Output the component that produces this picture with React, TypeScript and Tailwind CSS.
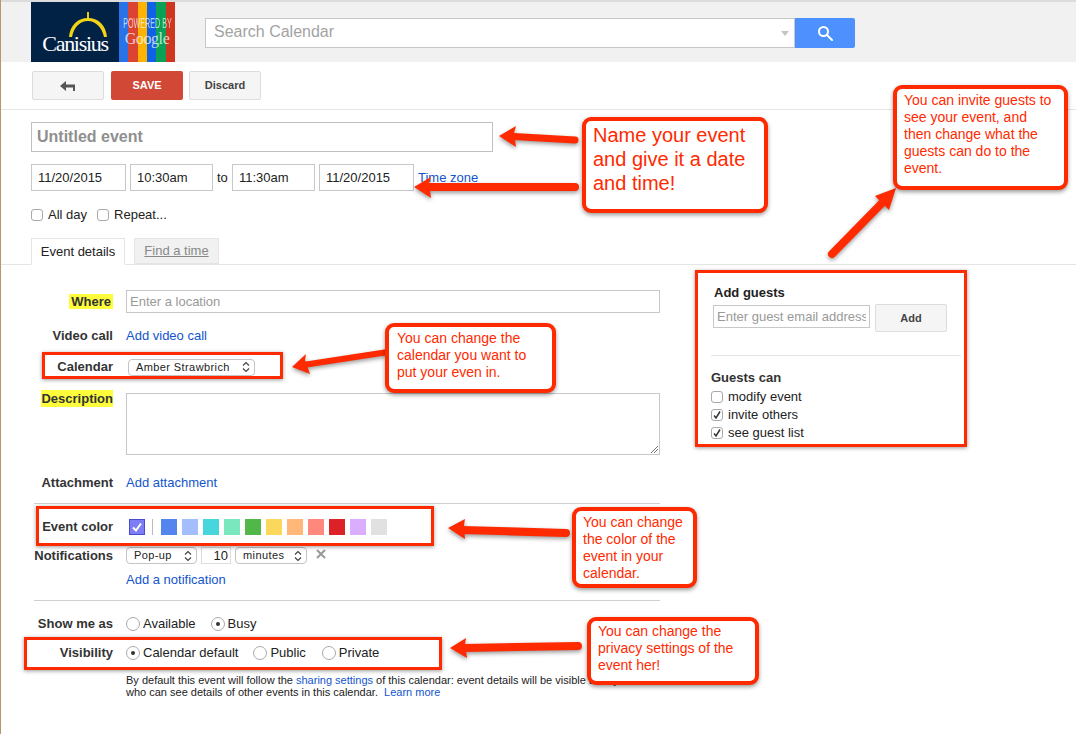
import type { ReactNode } from 'react'

const swatches = ['bg-[#5484ed]', 'bg-[#a4bdfc]', 'bg-[#46d6db]', 'bg-[#7ae7bf]', 'bg-[#51b749]', 'bg-[#fbd75b]', 'bg-[#ffb878]', 'bg-[#ff887c]', 'bg-[#dc2127]', 'bg-[#dbadff]', 'bg-[#e1e1e1]']
const stripes = ['bg-[#2a72e8]', 'bg-[#db4332]', 'bg-[#fdb300]', 'bg-[#0f62e6]', 'bg-[#0aa055]', 'bg-[#cf3620]']

// tip, head, shaft and tail of each annotation arrow
const arrows = [
  { head: '499,136 516,126 514,133 516,147', tail: 'M514 136.5 L575 140', w: 7 },
  { head: '414,187 431,177 429,183 431,198', tail: 'M428 187 L575 187', w: 8 },
  { head: '896,188 875,196 881,202 889,210', tail: 'M884 201 L832 254', w: 8 },
  { head: '292,367 306,354 305,360 310,374', tail: 'M303 365 L388 352', w: 6 },
  { head: '448,528 465,519 464,525 465,539', tail: 'M462 530 L566 533', w: 8 },
  { head: '450,648 466,638 465,644 467,658', tail: 'M463 648 L578 646', w: 8 },
]

function Chevrons() {
  return (
    <svg width="8" height="12" viewBox="0 0 8 12" className="shrink-0" fill="none" stroke="#444" strokeWidth="1.2">
      <path d="M1 4.5 L4 1.5 L7 4.5" />
      <path d="M1 7.5 L4 10.5 L7 7.5" />
    </svg>
  )
}

function Select({ label, className }: { label: string; className: string }) {
  return (
    <div className={`flex items-center justify-between h-[17px] pl-[7px] pr-[4px] rounded-[4px] border border-[#c4c4c4] bg-white text-[11px] text-[#222] tracking-[0.4px] ${className}`}>
      {label}
      <Chevrons />
    </div>
  )
}

function Checkbox({ checked }: { checked?: boolean }) {
  return (
    <span className="flex items-center justify-center w-[12px] h-[12px] rounded-[3px] border border-[#a9a9a9] bg-white shrink-0">
      {checked && (
        <svg width="10" height="10" viewBox="0 0 10 10" fill="none" stroke="#333" strokeWidth="1.5">
          <path d="M2 5.5 L4 8 L8 1.5" />
        </svg>
      )}
    </span>
  )
}

function Radio({ label, checked, className }: { label: string; checked?: boolean; className?: string }) {
  return (
    <span className={`flex items-center gap-[3px] ${className ?? ''}`}>
      <span className="flex items-center justify-center w-[14px] h-[14px] rounded-full border border-[#aaa] bg-white">
        {checked && <span className="w-[4px] h-[4px] rounded-full bg-[#333]" />}
      </span>
      <span className="text-[13px] text-[#222]">{label}</span>
    </span>
  )
}

function Row({ label, className, children }: { label: ReactNode; className?: string; children: ReactNode }) {
  return (
    <div className={`flex items-center ${className ?? ''}`}>
      <div className="w-[112px] shrink-0 text-right text-[13px] font-bold text-[#333]">{label}</div>
      <div className="ml-[13px] flex-1 flex items-center">{children}</div>
    </div>
  )
}

function Callout({ className, children }: { className: string; children: ReactNode }) {
  return (
    <div className={`absolute bg-white border-[4px] border-[#ff2a00] rounded-[9px] text-[#ff2a00] shadow-[0_2px_4px_rgba(0,0,0,0.4)] ${className}`}>
      {children}
    </div>
  )
}

function RedBox({ className }: { className: string }) {
  return <div className={`absolute border-[3px] border-[#ff2a00] shadow-[0_1px_4px_rgba(0,0,0,0.4)] ${className}`} />
}

const inputCls = 'border border-[#c8c8c8] bg-white outline-none text-[13px] text-[#222] placeholder:text-[#999]'

export default function App() {
  return (
    <div className="relative w-[1076px] h-[734px] overflow-hidden bg-white border-l border-[#b8956f] font-['Liberation_Sans',Arial,sans-serif]">
      {/* header */}
      <div className="h-[62px] bg-[#f1f1f1] border-t-2 border-[#dcdcdc] flex items-start">
        <div className="ml-[30px] flex w-[144px] h-[60px]">
          <div className="w-[88px] bg-[#012145] flex flex-col items-center pt-[10px]">
            <svg width="42" height="26" viewBox="0 0 42 26" fill="none" className="ml-[26px]">
              <path d="M21 0 V7" stroke="#e8c81e" strokeWidth="2" />
              <path d="M2 25 C3 13 11 6 21 6 C31 6 39 13 40 25 L37 25 C35 15 28 9 21 9 C13 9 7 15 5 25 Z" fill="#f2d416" />
            </svg>
            <span className="-mt-[6px] text-[22px] leading-[24px] tracking-[-1.3px] text-white font-['Liberation_Serif',serif]">Canisius</span>
          </div>
          <div className="relative flex-1 flex">
            {stripes.map((s, i) => <div key={i} className={`flex-1 ${s}`} />)}
            <div className="absolute inset-0 flex flex-col items-center pt-[13px]">
              <span className="text-[14px] leading-[16px] text-white/70 whitespace-nowrap scale-x-[0.51]">POWERED BY</span>
              <span className="text-[16px] leading-[16px] tracking-[-0.4px] text-white/75 font-['Liberation_Serif',serif]">Google</span>
            </div>
          </div>
        </div>
        <div className="ml-[30px] mt-[16px] flex h-[30px]">
          <div className="w-[590px] flex items-center justify-between bg-white border border-[#c8c8c8] pl-[8px] pr-[4px]">
            <span className="text-[16px] text-[#a3a3a3] -mt-[2px]">Search Calendar</span>
            <span className="w-0 h-0 mr-[1px] border-x-[4px] border-x-transparent border-t-[5px] border-t-[#c4c4c4]" />
          </div>
          <div className="w-[60px] flex items-center justify-center bg-[#4d90fe] rounded-r-[2px]">
            <svg width="16" height="16" viewBox="0 0 16 16" fill="none" stroke="white" strokeWidth="2">
              <circle cx="6.5" cy="6.5" r="4.5" />
              <path d="M10 10 L15 15" strokeLinecap="round" />
            </svg>
          </div>
        </div>
      </div>

      {/* action buttons */}
      <div className="h-[48px] border-b border-[#e5e5e5] flex items-start pt-[9px] pl-[31px]">
        <div className="w-[72px] h-[29px] flex items-center justify-center rounded-[2px] border border-[#dcdcdc] bg-[#f5f5f5]">
          <svg width="16" height="10" viewBox="0 0 16 10" fill="#555">
            <path d="M0 5 L6 0 V3.5 H15 V10 H13 V6.5 H6 V10 Z" />
          </svg>
        </div>
        <div className="ml-[7px] w-[72px] h-[29px] flex items-center justify-center rounded-[2px] bg-[#d14836] text-[11px] font-bold text-white">SAVE</div>
        <div className="ml-[6px] w-[72px] h-[29px] flex items-center justify-center rounded-[2px] border border-[#dcdcdc] bg-[#f5f5f5] text-[11px] font-bold text-[#444]">Discard</div>
      </div>

      {/* title and date */}
      <div className="pl-[30px] pt-[12px]">
        <input readOnly placeholder="Untitled event" className="block w-[462px] h-[30px] px-[5px] border border-[#c0c0c0] outline-none text-[16px] font-bold placeholder:text-[#8f8f8f]" />
        <div className="mt-[12px] flex items-center h-[27px]">
          <input readOnly defaultValue="11/20/2015" className={`w-[95px] h-full px-[6px] ${inputCls}`} />
          <input readOnly defaultValue="10:30am" className={`ml-[4px] w-[83px] h-full px-[6px] ${inputCls}`} />
          <span className="mx-[4px] w-[11px] text-[13px] text-[#222]">to</span>
          <input readOnly defaultValue="11:30am" className={`w-[83px] h-full px-[6px] ${inputCls}`} />
          <input readOnly defaultValue="11/20/2015" className={`ml-[4px] w-[95px] h-full px-[6px] ${inputCls}`} />
          <span className="ml-[4px] text-[13px] text-[#1155cc]">Time zone</span>
        </div>
        <div className="mt-[17px] flex items-center h-[14px] text-[13px] text-[#222]">
          <Checkbox />
          <span className="ml-[5px]">All day</span>
          <span className="ml-[10px]"><Checkbox /></span>
          <span className="ml-[5px]">Repeat...</span>
        </div>
      </div>

      {/* tabs */}
      <div className="mt-[16px] h-[27px] border-b border-[#e5e5e5] pl-[30px] flex items-end">
        <div className="w-[94px] h-[27px] -mb-px flex items-center justify-center bg-white border border-[#e5e5e5] border-b-white text-[13px] text-[#222]">Event details</div>
        <div className="ml-[9px] w-[85px] h-[26px] flex items-center justify-center bg-[#f1f1f1] border border-[#e5e5e5] text-[13px] text-[#888] underline">Find a time</div>
      </div>

      <div className="flex items-start">
        {/* details form */}
        <div className="w-[659px] shrink-0 pt-[25px]">
          <Row label={<span className="bg-[#fdfd3c] px-[2px]">Where</span>} className="h-[23px]">
            <input readOnly placeholder="Enter a location" className={`w-full h-[23px] px-[3px] ${inputCls}`} />
          </Row>
          <Row label="Video call" className="mt-[13px] h-[20px]">
            <span className="text-[13px] text-[#1155cc]">Add video call</span>
          </Row>
          <Row label="Calendar" className="mt-[12px] h-[18px]">
            <Select label="Amber Strawbrich" className="ml-[2px] w-[127px]" />
          </Row>
          <div className="mt-[17px] flex items-start">
            <div className="w-[112px] shrink-0 text-right text-[13px] font-bold text-[#333] -mt-[4px]"><span className="bg-[#fdfd3c] py-[1px]">Description</span></div>
            <div className="relative ml-[13px] flex-1 h-[62px] border border-[#c8c8c8]">
              <svg width="10" height="10" viewBox="0 0 10 10" className="absolute right-0 bottom-0" stroke="#777" strokeWidth="1">
                <path d="M2 9 L9 2 M5 9 L9 5" />
              </svg>
            </div>
          </div>
          <Row label="Attachment" className="mt-[18px] h-[20px]">
            <span className="text-[13px] text-[#1155cc]">Add attachment</span>
          </Row>
          <div className="mt-[10px] ml-[33px] h-px bg-[#cfcfcf]" />
          <Row label="Event color" className="mt-[15px] h-[16px]">
            <span className="ml-[3px] flex items-center justify-center w-[16px] h-[16px] bg-[#7d7df5] border border-[#4a4ad0]">
              <svg width="12" height="12" viewBox="0 0 12 12" fill="none" stroke="white" strokeWidth="2">
                <path d="M2 6.5 L5 9.5 L10 2.5" />
              </svg>
            </span>
            <span className="ml-[7px] w-px h-[16px] bg-[#bbb]" />
            <div className="ml-[8px] flex gap-[5px]">
              {swatches.map((s) => <span key={s} className={`w-[16px] h-[16px] ${s}`} />)}
            </div>
          </Row>
          <Row label="Notifications" className="mt-[13px] h-[17px] -translate-y-[1px]">
            <Select label="Pop-up" className="w-[71px]" />
            <span className="ml-[4px] w-[30px] h-[17px] flex items-center justify-end pr-[2px] border border-[#ddd] text-[13px] text-[#222]">10</span>
            <Select label="minutes" className="ml-[4px] w-[72px]" />
            <svg width="10" height="10" viewBox="0 0 10 10" stroke="#999" strokeWidth="2" className="ml-[9px] -mt-[3px]">
              <path d="M1 1 L9 9 M9 1 L1 9" />
            </svg>
          </Row>
          <div className="mt-[5px] pl-[125px] h-[20px] flex items-center text-[13px] text-[#1155cc]">Add a notification</div>
          <div className="mt-[10px] ml-[33px] h-px bg-[#cfcfcf]" />
          <Row label="Show me as" className="mt-[13px] h-[20px]">
            <Radio label="Available" />
            <Radio label="Busy" checked className="ml-[15px]" />
          </Row>
          <Row label="Visibility" className="mt-[9px] h-[20px]">
            <Radio label="Calendar default" checked />
            <Radio label="Public" className="ml-[15px]" />
            <Radio label="Private" className="ml-[16px]" />
          </Row>
          <div className="mt-[11px] pl-[125px] text-[11px] leading-[12px] text-[#222] whitespace-nowrap">
            <div>By default this event will follow the <span className="text-[#1155cc]">sharing settings</span> of this calendar: event details will be visible to anyone</div>
            <div>who can see details of other events in this calendar.&nbsp; <span className="text-[#1155cc]">Learn more</span></div>
          </div>
        </div>

        {/* guests panel */}
        <div className="ml-[51px] w-[250px] pt-[20px]">
          <div className="pl-[3px] text-[13px] leading-[15px] font-bold text-[#222]">Add guests</div>
          <div className="pl-[2px] flex items-start">
            <input readOnly placeholder="Enter guest email addresses" className={`mt-[5px] w-[157px] h-[23px] px-[3px] ${inputCls}`} />
            <div className="ml-[5px] mt-[4px] w-[72px] h-[28px] flex items-center justify-center rounded-[2px] border border-[#dcdcdc] bg-[#f5f5f5] text-[11px] font-bold text-[#444]">Add</div>
          </div>
          <div className="mt-[23px] h-px bg-[#e5e5e5]" />
          <div className="mt-[14px] text-[13px] leading-[15px] font-bold text-[#333]">Guests can</div>
          <div className="mt-[3px] flex flex-col">
            <div className="h-[18px] flex items-center gap-[5px] text-[13px] text-[#222]"><Checkbox />modify event</div>
            <div className="h-[18px] flex items-center gap-[5px] text-[13px] text-[#222]"><Checkbox checked />invite others</div>
            <div className="h-[18px] flex items-center gap-[5px] text-[13px] text-[#222]"><Checkbox checked />see guest list</div>
          </div>
        </div>
      </div>

      {/* annotations drawn over the page */}
      <svg width="1076" height="734" viewBox="0 0 1076 734" className="absolute -left-px top-0 pointer-events-none [filter:drop-shadow(0_2px_2px_rgba(0,0,0,0.4))]">
        {arrows.map((a, i) => (
          <g key={i}>
            <path d={a.tail} stroke="#ff2a00" strokeWidth={a.w} strokeLinecap="round" fill="none" />
            <polygon points={a.head} fill="#ff2a00" />
          </g>
        ))}
      </svg>

      <RedBox className="left-[41px] top-[352px] w-[241px] h-[27px]" />
      <RedBox className="left-[35px] top-[506px] w-[398px] h-[40px]" />
      <RedBox className="left-[23px] top-[637px] w-[418px] h-[33px]" />
      <RedBox className="left-[694px] top-[270px] w-[272px] h-[177px]" />

      <Callout className="left-[581px] top-[117px] w-[186px] h-[96px] pl-[7px] pt-[2px] text-[20px] leading-[24px]">
        Name your event<br />and give it a date<br />and time!
      </Callout>
      <Callout className="left-[892px] top-[85px] w-[175px] h-[105px] pl-[7px] pt-[3px] text-[14px] leading-[17px]">
        You can invite guests to<br />see your event, and<br />then change what the<br />guests can do to the<br />event.
      </Callout>
      <Callout className="left-[384px] top-[323px] w-[171px] h-[70px] pl-[8px] pt-[3px] text-[14px] leading-[17px]">
        You can change the<br />calendar you want to<br />put your even in.
      </Callout>
      <Callout className="left-[571px] top-[507px] w-[125px] h-[81px] pl-[7px] pt-[3px] text-[14px] leading-[17px]">
        You can change<br />the color of the<br />event in your<br />calendar.
      </Callout>
      <Callout className="left-[586px] top-[617px] w-[172px] h-[68px] pl-[7px] pt-[2px] text-[14px] leading-[17px]">
        You can change the<br />privacy settings of the<br />event her!
      </Callout>
    </div>
  )
}
